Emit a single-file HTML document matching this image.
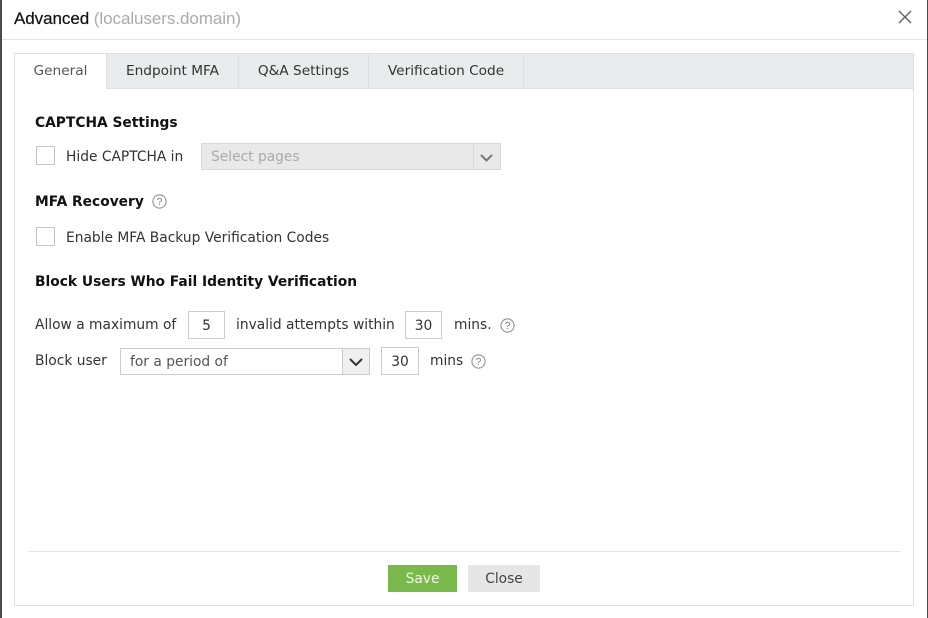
<!DOCTYPE html>
<html><head><meta charset="utf-8"><style>
html,body{margin:0;padding:0}
body{width:928px;height:618px;overflow:hidden;position:relative;background:#fff;font-family:"DejaVu Sans","Liberation Sans",sans-serif;font-size:13.8px;color:#333}
.a{position:absolute;box-sizing:border-box;white-space:nowrap}
.t{line-height:20px;height:20px;margin-top:1px}
.b{font-weight:bold;color:#111;font-size:13.8px}
.cb{width:19px;height:19px;border:1px solid #c4c4c4;background:#fff}
.in{border:1px solid #ccc;background:#fff;text-align:center;line-height:28px;color:#333}
.tab{top:54px;height:35px;line-height:34px;text-align:center;background:#e9ecec;border-right:1px solid #dcdfdf;color:#333;font-size:13.7px}
</style></head><body>
<div class="a" style="left:0;top:0;width:2px;height:618px;background:#4a4a4a"></div>
<div class="a" style="left:927px;top:0;width:1px;height:618px;background:#4a4a4a"></div>
<div class="a" style="left:14px;top:8px;height:22px;line-height:22px;font-family:'Liberation Sans',sans-serif;font-size:17px;letter-spacing:-0.06px;color:#111;-webkit-text-stroke:0.2px #111">Advanced <span style="color:#aaa;-webkit-text-stroke:0">(localusers.domain)</span></div>
<svg class="a" style="left:896px;top:8px" width="18" height="18" viewBox="0 0 18 18"><path d="M3 3L15 15M15 3L3 15" stroke="#666" stroke-width="1.5" fill="none"/></svg>
<div class="a" style="left:2px;top:39px;width:925px;height:1px;background:#e4e4e4"></div>
<div class="a" style="left:14px;top:53px;width:900px;height:553px;border:1px solid #e0e0e0;background:#fff"></div>
<div class="a" style="left:15px;top:54px;width:898px;height:35px;background:#e9ecec;border-bottom:1px solid #dfe1e1"></div>
<div class="a tab" style="left:15px;width:92px;background:#fff;color:#555;border-right:1px solid #dfe1e1">General</div>
<div class="a tab" style="left:107px;width:132px;height:34px">Endpoint MFA</div>
<div class="a tab" style="left:239px;width:130px;height:34px">Q&amp;A Settings</div>
<div class="a tab" style="left:369px;width:155px;height:34px">Verification Code</div>

<div class="a t b" style="left:35px;top:112px">CAPTCHA Settings</div>
<div class="a cb" style="left:36px;top:146px"></div>
<div class="a t" style="left:66px;top:146px">Hide CAPTCHA in</div>
<div class="a" style="left:201px;top:143px;width:300px;height:27px;background:#e9e9e9;border:1px solid #d8d8d8"></div>
<div class="a t" style="left:211px;top:146px;color:#aaa">Select pages</div>
<div class="a" style="left:473px;top:144px;width:1px;height:25px;background:#d8d8d8"></div>
<svg class="a" style="left:479px;top:153px" width="15" height="10" viewBox="0 0 15 10"><path d="M2 2L7.5 7.5L13 2" stroke="#777" stroke-width="2" fill="none"/></svg>

<div class="a t b" style="left:35px;top:191px">MFA Recovery</div>
<svg class="a" style="left:152px;top:194px" width="15" height="15" viewBox="0 0 15 15"><circle cx="7.5" cy="7.5" r="6.6" stroke="#888" fill="none"/><text x="7.5" y="11" text-anchor="middle" font-size="10" fill="#777" font-family="Liberation Sans">?</text></svg>
<div class="a cb" style="left:36px;top:227px"></div>
<div class="a t" style="left:66px;top:227px">Enable MFA Backup Verification Codes</div>

<div class="a t b" style="left:35px;top:271px">Block Users Who Fail Identity Verification</div>

<div class="a t" style="left:35px;top:314px">Allow a maximum of</div>
<div class="a in" style="left:188px;top:311px;width:37px;height:28px">5</div>
<div class="a t" style="left:236px;top:314px">invalid attempts within</div>
<div class="a in" style="left:405px;top:311px;width:37px;height:28px">30</div>
<div class="a t" style="left:454px;top:314px">mins.</div>
<svg class="a" style="left:500px;top:318px" width="15" height="15" viewBox="0 0 15 15"><circle cx="7.5" cy="7.5" r="6.6" stroke="#888" fill="none"/><text x="7.5" y="11" text-anchor="middle" font-size="10" fill="#777" font-family="Liberation Sans">?</text></svg>

<div class="a t" style="left:35px;top:350px">Block user</div>
<div class="a" style="left:120px;top:348px;width:250px;height:27px;border:1px solid #ccc;background:#fff"></div>
<div class="a t" style="left:130px;top:351px;color:#555">for a period of</div>
<div class="a" style="left:342px;top:349px;width:27px;height:25px;background:#f0f0f0;border-left:1px solid #ccc"></div>
<svg class="a" style="left:348px;top:357px" width="16" height="10" viewBox="0 0 16 10"><path d="M2 2L8 8L14 2" stroke="#333" stroke-width="2" fill="none"/></svg>
<div class="a in" style="left:381px;top:347px;width:38px;height:28px">30</div>
<div class="a t" style="left:430px;top:350px">mins</div>
<svg class="a" style="left:471px;top:354px" width="15" height="15" viewBox="0 0 15 15"><circle cx="7.5" cy="7.5" r="6.6" stroke="#888" fill="none"/><text x="7.5" y="11" text-anchor="middle" font-size="10" fill="#777" font-family="Liberation Sans">?</text></svg>

<div class="a" style="left:28px;top:551px;width:873px;height:1px;background:#e4e4e4"></div>
<div class="a" style="left:388px;top:565px;width:69px;height:27px;background:#7ab94b;color:#eef7e6;text-align:center;line-height:28px">Save</div>
<div class="a" style="left:468px;top:565px;width:72px;height:27px;background:#e6e6e6;color:#444;text-align:center;line-height:28px">Close</div>
</body></html>
